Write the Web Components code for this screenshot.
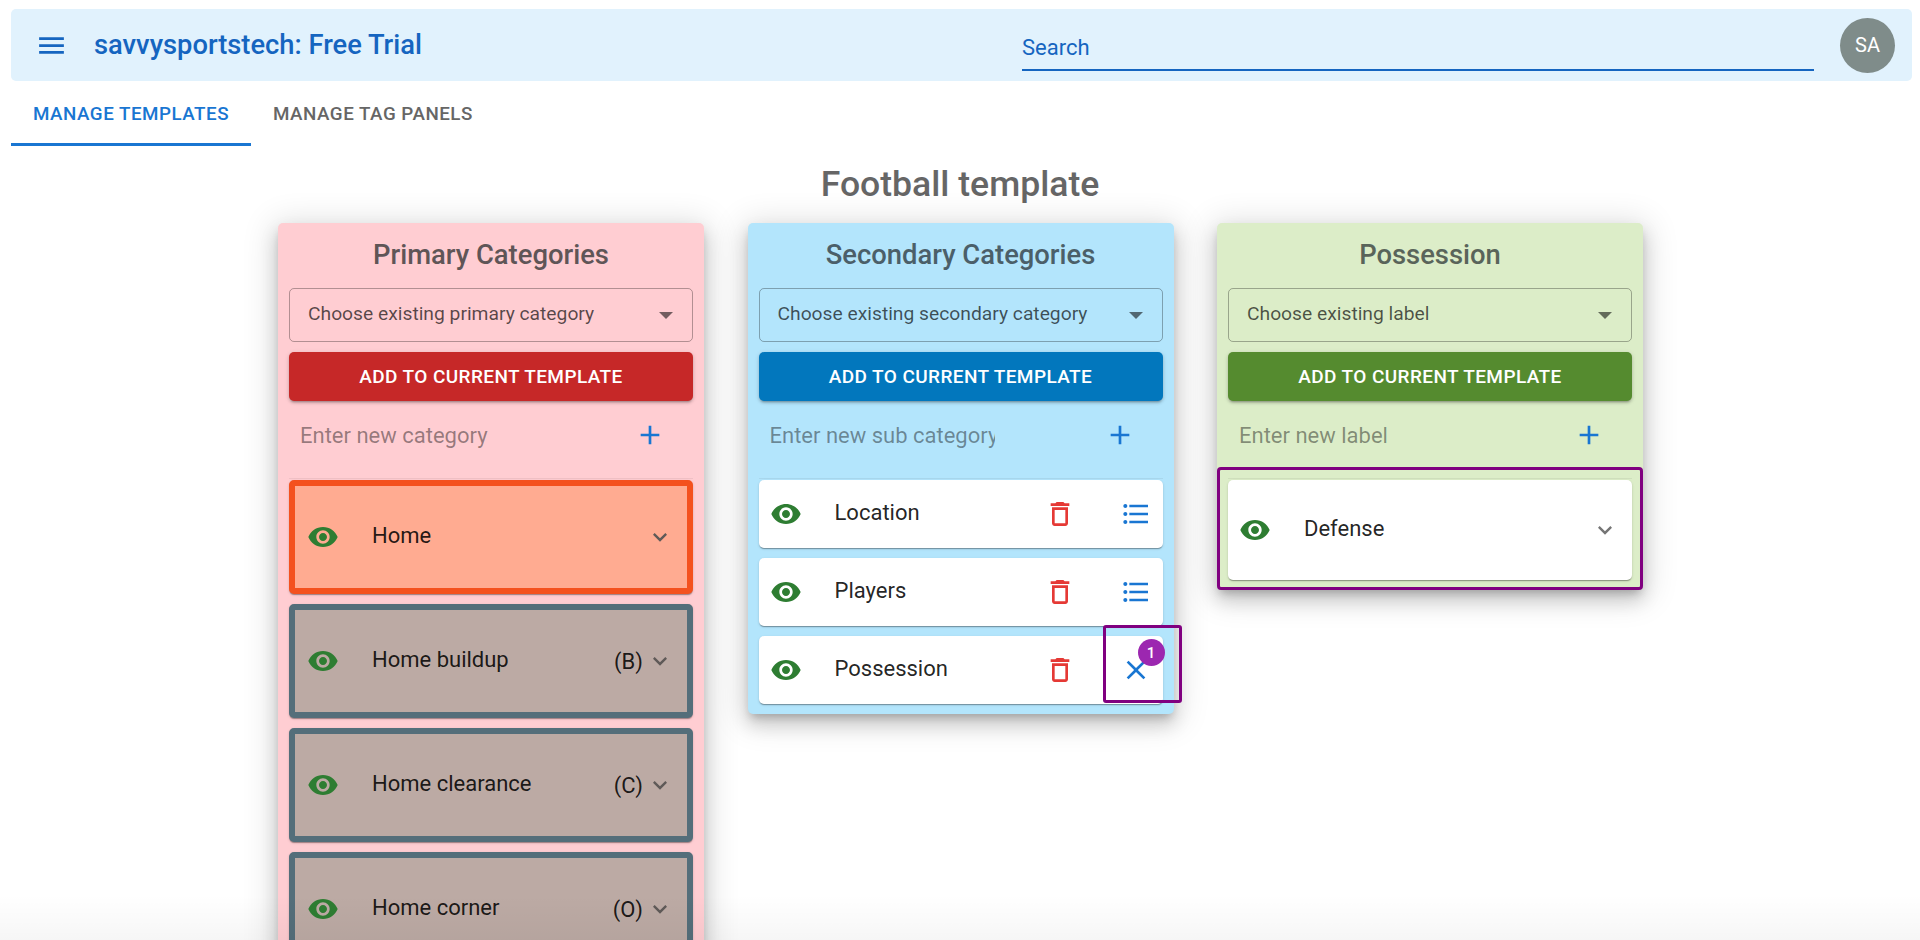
<!DOCTYPE html>
<html>
<head>
<meta charset="utf-8">
<title>Manage templates</title>
<style>
  html, body { margin: 0; height: 940px; overflow: hidden; background: #fff; }
  body { font-family: Roboto, "Liberation Sans", sans-serif; }
</style>
</head>
<body>
<sst-page>
  <sst-appbar slot="bar" title="savvysportstech: Free Trial"></sst-appbar>
  <sst-tabs slot="bar"></sst-tabs>
  <sst-heading slot="bar">Football template</sst-heading>

  <sst-panel title="Primary Categories" choose="Choose existing primary category" enter="Enter new category"
             style="--bg:#ffcdd2;--btn:#c62828;--ink:#5f5557">
    <sst-row type="expand" label="Home" style="--row:#ffab91;--edge:#f4511e"></sst-row>
    <sst-row type="expand" label="Home buildup" key="(B)" style="--row:#bcaaa4;--edge:#546e7a"></sst-row>
    <sst-row type="expand" label="Home clearance" key="(C)" style="--row:#bcaaa4;--edge:#546e7a"></sst-row>
    <sst-row type="expand" label="Home corner" key="(O)" style="--row:#bcaaa4;--edge:#546e7a"></sst-row>
  </sst-panel>

  <sst-panel title="Secondary Categories" choose="Choose existing secondary category" enter="Enter new sub category"
             style="--bg:#b3e5fc;--btn:#0277bd;--ink:#4b5f69">
    <sst-row type="list" label="Location"></sst-row>
    <sst-row type="list" label="Players"></sst-row>
    <sst-row type="close" label="Possession"></sst-row>
  </sst-panel>

  <sst-panel title="Possession" choose="Choose existing label" enter="Enter new label" outlined
             style="--bg:#dcedc8;--btn:#558b2f;--ink:#59645a">
    <sst-row type="expand" short label="Defense" style="--chev:#757575"></sst-row>
  </sst-panel>
</sst-page>

<script>
(function () {
  // material icon paths, all on a 24 box
  var ICONS = {
    menu: 'M3 18h18v-2H3v2zm0-5h18v-2H3v2zm0-7v2h18V6H3z',
    eye: 'M12 4.5C7 4.5 2.73 7.61 1 12c1.73 4.39 6 7.5 11 7.5s9.27-3.11 11-7.5c-1.73-4.39-6-7.5-11-7.5zM12 17c-2.76 0-5-2.24-5-5s2.24-5 5-5 5 2.24 5 5-2.24 5-5 5zm0-8c-1.66 0-3 1.34-3 3s1.34 3 3 3 3-1.34 3-3-1.34-3-3-3z',
    chevron: 'M16.59 8.59L12 13.17 7.41 8.59 6 10l6 6 6-6z',
    plus: 'M19 13h-6v6h-2v-6H5v-2h6V5h2v6h6v2z',
    trash: 'M16 9v10H8V9h8m-1.5-6h-5l-1 1H5v2h14V4h-3.5l-1-1zM18 7H6v12c0 1.1.9 2 2 2h8c1.1 0 2-.9 2-2V7z',
    list: 'M4 10.5c-.83 0-1.5.67-1.5 1.5s.67 1.5 1.5 1.5 1.5-.67 1.5-1.5-.67-1.5-1.5-1.5zm0-6c-.83 0-1.5.67-1.5 1.5S3.17 7.5 4 7.5 5.5 6.83 5.5 6 4.83 4.5 4 4.5zm0 12c-.83 0-1.5.68-1.5 1.5s.68 1.5 1.5 1.5 1.5-.68 1.5-1.5-.67-1.5-1.5-1.5zM7 19h14v-2H7v2zm0-6h14v-2H7v2zm0-8v2h14V5H7z',
    close: 'M19 6.41L17.59 5 12 10.59 6.41 5 5 6.41 10.59 12 5 17.59 6.41 19 12 13.41 17.59 19 19 17.59 13.41 12z'
  };

  function icon(name, size, color) {
    return '<svg width="' + size + '" height="' + size + '" viewBox="0 0 24 24" fill="' + color + '" style="display:block;flex:none">' +
      '<path d="' + ICONS[name] + '"></path></svg>';
  }

  class SstPage extends HTMLElement {
    constructor() {
      super();
      var root = this.attachShadow({ mode: 'open' });
      root.innerHTML = [
        '<style>',
        ':host{display:block;height:940px;overflow:hidden;position:relative;}',
        '.columns{display:flex;justify-content:center;align-items:flex-start;gap:43.5px;margin-top:18px;padding-left:1px;}',
        '.fade{position:absolute;left:0;right:0;bottom:0;height:45px;background:linear-gradient(rgba(0,0,0,0),rgba(0,0,0,.035));}',
        '</style>',
        '<slot name="bar"></slot>',
        '<div class="columns"><slot></slot></div>',
        '<div class="fade"></div>'
      ].join('');
    }
  }

  class SstAppbar extends HTMLElement {
    constructor() {
      super();
      var root = this.attachShadow({ mode: 'open' });
      root.innerHTML = [
        '<style>',
        ':host{display:block;margin:9px 8px 0 11px;}',
        '.bar{height:72px;box-sizing:border-box;background:#e1f2fd;border-radius:5px;display:flex;align-items:center;padding:0 0 0 24px;color:#1565c0;}',
        '.title{font-size:27.3px;font-weight:500;margin-left:26px;width:928px;flex:none;white-space:nowrap;}',
        '.search{width:792px;flex:none;height:46px;box-sizing:border-box;border-bottom:2px solid #1565c0;font-size:22px;line-height:46px;margin-top:5px;}',
        '.avatar{width:55px;height:55px;border-radius:50%;background:#7f8c8a;color:#fff;font-size:20px;display:flex;align-items:center;justify-content:center;margin-left:26px;flex:none;}',
        '</style>',
        '<div class="bar">',
        icon('menu', 33, '#1565c0'),
        '<div class="title"></div>',
        '<div class="search">Search</div>',
        '<div class="avatar">SA</div>',
        '</div>'
      ].join('');
      root.querySelector('.title').textContent = this.getAttribute('title');
    }
  }

  class SstTabs extends HTMLElement {
    constructor() {
      super();
      var root = this.attachShadow({ mode: 'open' });
      root.innerHTML = [
        '<style>',
        ':host{display:block;margin:5px 0 0 11px;}',
        '.tabs{display:flex;height:60px;}',
        '.tab{box-sizing:border-box;height:60px;padding:0 22px 5px;display:flex;align-items:center;font-size:18.8px;font-weight:500;letter-spacing:.5px;color:#666;}',
        '.on{color:#1976d2;border-bottom:3px solid #1976d2;padding-bottom:2px;}',
        '</style>',
        '<div class="tabs"><div class="tab on">MANAGE TEMPLATES</div><div class="tab">MANAGE TAG PANELS</div></div>'
      ].join('');
    }
  }

  class SstHeading extends HTMLElement {
    constructor() {
      super();
      var root = this.attachShadow({ mode: 'open' });
      root.innerHTML = [
        '<style>',
        ':host{display:block;text-align:center;margin-top:17px;font-size:35.6px;line-height:42px;font-weight:500;color:#666;}',
        '</style><slot></slot>'
      ].join('');
    }
  }

  class SstPanel extends HTMLElement {
    constructor() {
      super();
      var root = this.attachShadow({ mode: 'open' });
      root.innerHTML = [
        '<style>',
        ':host{display:block;width:426px;flex:none;position:relative;background:var(--bg);border-radius:5px;padding:0 11px 10px;box-sizing:border-box;',
        'box-shadow:0 6px 8px -3px rgba(0,0,0,.2),0 10px 18px 1px rgba(0,0,0,.14),0 4px 32px 6px rgba(0,0,0,.12);}',
        'h2{margin:0;height:65px;box-sizing:border-box;padding-top:14px;text-align:center;font-size:27.4px;line-height:36px;font-weight:500;color:var(--ink);}',
        '.select{height:54px;box-sizing:border-box;border:1px solid rgba(0,0,0,.3);border-radius:5px;display:flex;align-items:center;justify-content:space-between;padding:0 18px 4px 18px;font-size:19.25px;color:rgba(0,0,0,.66);}',
        '.caret{width:0;height:0;border-left:7px solid transparent;border-right:7px solid transparent;border-top:7px solid rgba(0,0,0,.55);margin-top:5px;margin-right:1px;}',
        '.btn{margin-top:10px;height:49px;border-radius:5px;background:var(--btn);color:#fff;display:flex;align-items:center;justify-content:center;font-size:19px;font-weight:500;letter-spacing:.4px;box-shadow:0 3px 2px -2px rgba(0,0,0,.2),0 2px 3px 0 rgba(0,0,0,.14),0 1px 5px 0 rgba(0,0,0,.12);}',
        '.add{height:77px;box-sizing:border-box;display:flex;align-items:center;padding:0 0 9px 11px;font-size:22px;color:rgba(0,0,0,.42);position:relative;}',
        '.add span{width:225px;overflow:hidden;white-space:nowrap;flex:none;}',
        '.add svg{margin-left:auto;margin-right:27px;}',
        '.list{display:flex;flex-direction:column;gap:10px;border-top:1px solid rgba(0,0,0,.06);padding-top:1px;}',
        ':host([outlined])::after{content:"";position:absolute;left:0;right:0;top:244px;bottom:0;border:3px solid #800080;border-radius:4px;pointer-events:none;}',
        '</style>',
        '<h2></h2>',
        '<div class="select"><span class="choose"></span><i class="caret"></i></div>',
        '<div class="btn">ADD TO CURRENT TEMPLATE</div>',
        '<div class="add"><span class="enter"></span>' + icon('plus', 32, '#1976d2') + '</div>',
        '<div class="list"><slot></slot></div>'
      ].join('');
      root.querySelector('h2').textContent = this.getAttribute('title');
      root.querySelector('.choose').textContent = this.getAttribute('choose');
      root.querySelector('.enter').textContent = this.getAttribute('enter');
    }
  }

  class SstRow extends HTMLElement {
    constructor() {
      super();
      var type = this.getAttribute('type');
      var short = this.hasAttribute('short');
      var tall = type === 'expand' && !short;
      var h = tall ? 114 : (type === 'expand' ? 100 : 68);
      var right;
      if (type === 'expand') {
        right = '<span class="key">' + (this.getAttribute('key') || '') + '</span>' +
          '<span class="slot chev">' + icon('chevron', 28, 'var(--chev,#5f5a58)') + '</span>';
      } else {
        right = '<span class="slot trash">' + icon('trash', 32, '#e53935') + '</span>' +
          '<span class="slot last">' + icon(type === 'list' ? 'list' : 'close', 32, '#1976d2') +
          (type === 'close' ? '<b class="mark"></b><b class="badge">1</b>' : '') + '</span>';
      }
      var root = this.attachShadow({ mode: 'open' });
      root.innerHTML = [
        '<style>',
        ':host{display:block;}',
        '.row{height:' + h + 'px;box-sizing:border-box;background:var(--row,#fff);border:6px solid var(--edge,transparent);border-radius:5px;display:flex;align-items:center;color:rgba(0,0,0,.87);font-size:22px;',
        'box-shadow:0 2px 1px -1px rgba(0,0,0,.2),0 1px 1px 0 rgba(0,0,0,.14),0 1px 3px 0 rgba(0,0,0,.12);}',
        '.eye{margin-left:' + (tall ? 12 : 5) + 'px;}',
        '.label{margin-left:33px;flex:1;white-space:nowrap;margin-top:-3px;}',
        '.key{margin-right:3px;}',
        '.slot{position:relative;display:block;}',
        '.chev{margin-right:' + (short ? 7 : 13) + 'px;}',
        '.trash{margin-right:44px;}',
        '.last{margin-right:5px;}',
        '.mark{position:absolute;left:-17px;top:-29px;width:79px;height:78px;box-sizing:border-box;border:3px solid #800080;border-radius:3px;}',
        '.badge{position:absolute;left:18px;top:-15px;width:27px;height:27px;border-radius:50%;background:#9c27b0;color:#fff;font-size:15px;font-weight:500;display:flex;align-items:center;justify-content:center;}',
        '</style>',
        '<div class="row">',
        '<span class="eye">' + icon('eye', 32, '#2e7d32') + '</span>',
        '<span class="label"></span>',
        right,
        '</div>'
      ].join('');
      root.querySelector('.label').textContent = this.getAttribute('label');
    }
  }

  customElements.define('sst-page', SstPage);
  customElements.define('sst-appbar', SstAppbar);
  customElements.define('sst-tabs', SstTabs);
  customElements.define('sst-heading', SstHeading);
  customElements.define('sst-panel', SstPanel);
  customElements.define('sst-row', SstRow);
})();
</script>
</body>
</html>
